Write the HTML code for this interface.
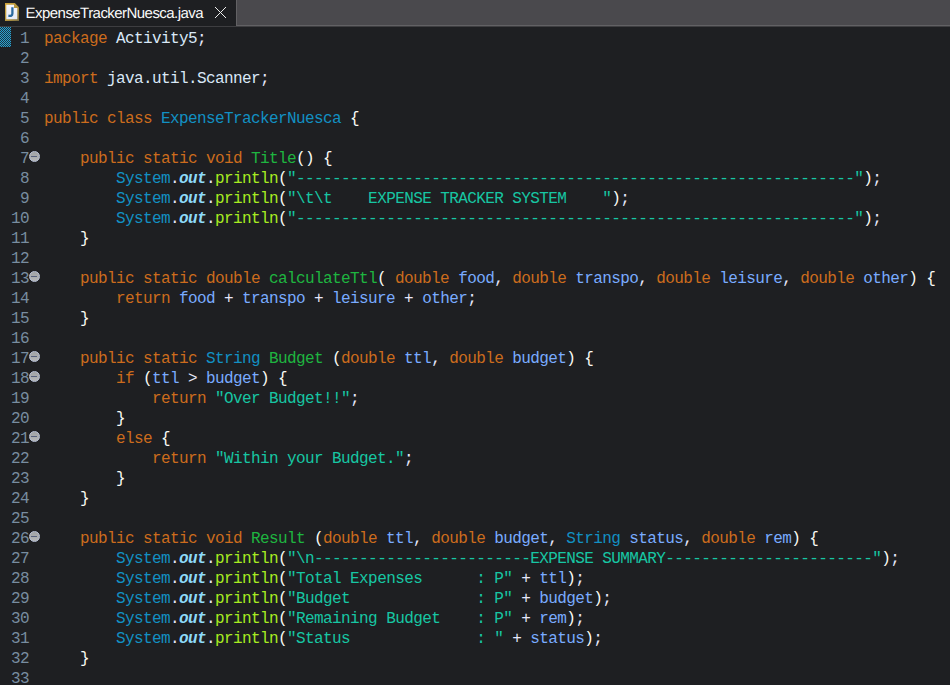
<!DOCTYPE html>
<html><head><meta charset="utf-8"><title>ExpenseTrackerNuesca.java</title>
<style>
html,body{margin:0;padding:0;}
body{width:950px;height:685px;overflow:hidden;background:#1e1f22;position:relative;font-family:"Liberation Mono",monospace;}
#tabbar{position:absolute;left:0;top:0;width:950px;height:25px;background:#4a494d;}
#tabline{position:absolute;left:236px;top:25px;width:714px;height:1px;background:#626164;}
#tabline2{position:absolute;left:0;top:26px;width:950px;height:1px;background:#3e3e41;}
#tab{position:absolute;left:0;top:0;width:236px;height:26px;background:#1e1f22;}
#tabsep{position:absolute;left:236px;top:0;width:1px;height:26px;background:#626164;}
#tabtxt{position:absolute;left:25.6px;top:5.5px;text-rendering:geometricPrecision;font-family:"Liberation Sans",sans-serif;font-size:15px;letter-spacing:-0.55px;line-height:16px;color:#fafafa;white-space:pre;transform-origin:0 0;}
#ticon{position:absolute;left:5px;top:3px;}
#tclose{position:absolute;left:214px;top:6px;}
#mark{position:absolute;left:0;top:27px;width:11px;height:20px;}
#ed{position:absolute;left:0;top:27px;width:950px;}
.ln{position:relative;height:20px;line-height:20px;font-size:16px;letter-spacing:-0.6px;white-space:pre;color:#d9e8f7;}
.no{position:absolute;left:0;top:2px;width:29px;text-align:right;color:#788da0;}
.cd{position:absolute;left:44px;top:2px;}
.fd{position:absolute;left:29px;top:3.6px;width:11.4px;height:11.4px;box-sizing:border-box;border-radius:50%;background:linear-gradient(#a0a2a4,#b4b6b8);border:1.2px solid #b9c2d8;}
.fd:after{content:"";position:absolute;left:1.1px;top:4.2px;width:5.8px;height:1px;background:#56617f;}
.k{color:#cc6c1d}.c{color:#1290c3}.m{color:#1eb540}.n{color:#a7ec21}.o{color:#e6e6fa}.b{color:#f9faf4}
.s{color:#17c6a3}.p{color:#79abff}.d{color:#d9e8f7}.f{color:#8ddaf8;font-weight:bold;font-style:italic}

</style></head>
<body>
<div id="tabbar"></div>
<div id="tab"></div>
<div id="tabsep"></div>
<div id="tabline"></div>
<div id="tabline2"></div>
<svg id="ticon" width="14" height="18" viewBox="0 0 14 18"><defs><linearGradient id="gb" x1="0" y1="0" x2="1" y2="1"><stop offset="0" stop-color="#d2a63a"/><stop offset="0.55" stop-color="#b3953f"/><stop offset="1" stop-color="#7a6d42"/></linearGradient><linearGradient id="gp" x1="0" y1="0" x2="0" y2="1"><stop offset="0" stop-color="#f7f8fd"/><stop offset="1" stop-color="#e6ebf8"/></linearGradient></defs><path d="M0 0H9.8L14 4.2V18H0Z" fill="url(#gb)"/><path d="M1.3 1.8H9V5H12.3V16.2H1.3Z" fill="url(#gp)"/><path d="M7.4 4.3V10.6C7.4 12.7 5.9 13.1 3.4 12.6" fill="none" stroke="#2a6aa0" stroke-width="2.3"/></svg>
<div id="tabtxt">ExpenseTrackerNuesca.java</div>
<svg id="tclose" width="13" height="13" viewBox="0 0 13 13"><path d="M1 1L12 12M12 1L1 12" stroke="#ececec" stroke-width="1" fill="none"/></svg>
<svg id="mark" width="11" height="20" viewBox="0 0 11 20"><defs><pattern id="ck" width="2" height="2" patternUnits="userSpaceOnUse"><rect width="2" height="2" fill="#1b3542"/><rect width="1" height="1" fill="#2aa0cf"/><rect x="1" y="1" width="1" height="1" fill="#2aa0cf"/></pattern></defs><rect width="11" height="20" fill="url(#ck)"/></svg>

<div id="ed">
<div class="ln"><span class="no">1</span><span class="cd"><span class="k">package</span><span class="d"> Activity5</span><span class="o">;</span></span></div>
<div class="ln"><span class="no">2</span><span class="cd"></span></div>
<div class="ln"><span class="no">3</span><span class="cd"><span class="k">import</span><span class="d"> java.util.Scanner</span><span class="o">;</span></span></div>
<div class="ln"><span class="no">4</span><span class="cd"></span></div>
<div class="ln"><span class="no">5</span><span class="cd"><span class="k">public class </span><span class="c">ExpenseTrackerNuesca</span><span class="b"> {</span></span></div>
<div class="ln"><span class="no">6</span><span class="cd"></span></div>
<div class="ln"><span class="no">7</span><i class="fd"></i><span class="cd">    <span class="k">public static void </span><span class="m">Title</span><span class="b">() {</span></span></div>
<div class="ln"><span class="no">8</span><span class="cd">        <span class="c">System</span><span class="o">.</span><span class="f">out</span><span class="o">.</span><span class="n">println</span><span class="b">(</span><span class="s">"--------------------------------------------------------------"</span><span class="b">)</span><span class="o">;</span></span></div>
<div class="ln"><span class="no">9</span><span class="cd">        <span class="c">System</span><span class="o">.</span><span class="f">out</span><span class="o">.</span><span class="n">println</span><span class="b">(</span><span class="s">"\t\t    EXPENSE TRACKER SYSTEM    "</span><span class="b">)</span><span class="o">;</span></span></div>
<div class="ln"><span class="no">10</span><span class="cd">        <span class="c">System</span><span class="o">.</span><span class="f">out</span><span class="o">.</span><span class="n">println</span><span class="b">(</span><span class="s">"--------------------------------------------------------------"</span><span class="b">)</span><span class="o">;</span></span></div>
<div class="ln"><span class="no">11</span><span class="cd">    <span class="b">}</span></span></div>
<div class="ln"><span class="no">12</span><span class="cd"></span></div>
<div class="ln"><span class="no">13</span><i class="fd"></i><span class="cd">    <span class="k">public static double </span><span class="m">calculateTtl</span><span class="b">( </span><span class="k">double </span><span class="p">food</span><span class="o">, </span><span class="k">double </span><span class="p">transpo</span><span class="o">, </span><span class="k">double </span><span class="p">leisure</span><span class="o">, </span><span class="k">double </span><span class="p">other</span><span class="b">) {</span></span></div>
<div class="ln"><span class="no">14</span><span class="cd">        <span class="k">return </span><span class="p">food</span><span class="o"> + </span><span class="p">transpo</span><span class="o"> + </span><span class="p">leisure</span><span class="o"> + </span><span class="p">other</span><span class="o">;</span></span></div>
<div class="ln"><span class="no">15</span><span class="cd">    <span class="b">}</span></span></div>
<div class="ln"><span class="no">16</span><span class="cd"></span></div>
<div class="ln"><span class="no">17</span><i class="fd"></i><span class="cd">    <span class="k">public static </span><span class="c">String </span><span class="m">Budget</span><span class="b"> (</span><span class="k">double </span><span class="p">ttl</span><span class="o">, </span><span class="k">double </span><span class="p">budget</span><span class="b">) {</span></span></div>
<div class="ln"><span class="no">18</span><i class="fd"></i><span class="cd">        <span class="k">if </span><span class="b">(</span><span class="p">ttl</span><span class="o"> &gt; </span><span class="p">budget</span><span class="b">) {</span></span></div>
<div class="ln"><span class="no">19</span><span class="cd">            <span class="k">return </span><span class="s">"Over Budget!!"</span><span class="o">;</span></span></div>
<div class="ln"><span class="no">20</span><span class="cd">        <span class="b">}</span></span></div>
<div class="ln"><span class="no">21</span><i class="fd"></i><span class="cd">        <span class="k">else </span><span class="b">{</span></span></div>
<div class="ln"><span class="no">22</span><span class="cd">            <span class="k">return </span><span class="s">"Within your Budget."</span><span class="o">;</span></span></div>
<div class="ln"><span class="no">23</span><span class="cd">        <span class="b">}</span></span></div>
<div class="ln"><span class="no">24</span><span class="cd">    <span class="b">}</span></span></div>
<div class="ln"><span class="no">25</span><span class="cd"></span></div>
<div class="ln"><span class="no">26</span><i class="fd"></i><span class="cd">    <span class="k">public static void </span><span class="m">Result</span><span class="b"> (</span><span class="k">double </span><span class="p">ttl</span><span class="o">, </span><span class="k">double </span><span class="p">budget</span><span class="o">, </span><span class="c">String </span><span class="p">status</span><span class="o">, </span><span class="k">double </span><span class="p">rem</span><span class="b">) {</span></span></div>
<div class="ln"><span class="no">27</span><span class="cd">        <span class="c">System</span><span class="o">.</span><span class="f">out</span><span class="o">.</span><span class="n">println</span><span class="b">(</span><span class="s">"\n------------------------EXPENSE SUMMARY-----------------------"</span><span class="b">)</span><span class="o">;</span></span></div>
<div class="ln"><span class="no">28</span><span class="cd">        <span class="c">System</span><span class="o">.</span><span class="f">out</span><span class="o">.</span><span class="n">println</span><span class="b">(</span><span class="s">"Total Expenses      : P"</span><span class="o"> + </span><span class="p">ttl</span><span class="b">)</span><span class="o">;</span></span></div>
<div class="ln"><span class="no">29</span><span class="cd">        <span class="c">System</span><span class="o">.</span><span class="f">out</span><span class="o">.</span><span class="n">println</span><span class="b">(</span><span class="s">"Budget              : P"</span><span class="o"> + </span><span class="p">budget</span><span class="b">)</span><span class="o">;</span></span></div>
<div class="ln"><span class="no">30</span><span class="cd">        <span class="c">System</span><span class="o">.</span><span class="f">out</span><span class="o">.</span><span class="n">println</span><span class="b">(</span><span class="s">"Remaining Budget    : P"</span><span class="o"> + </span><span class="p">rem</span><span class="b">)</span><span class="o">;</span></span></div>
<div class="ln"><span class="no">31</span><span class="cd">        <span class="c">System</span><span class="o">.</span><span class="f">out</span><span class="o">.</span><span class="n">println</span><span class="b">(</span><span class="s">"Status              : "</span><span class="o"> + </span><span class="p">status</span><span class="b">)</span><span class="o">;</span></span></div>
<div class="ln"><span class="no">32</span><span class="cd">    <span class="b">}</span></span></div>
<div class="ln"><span class="no">33</span><span class="cd"></span></div>
</div>
</body></html>
